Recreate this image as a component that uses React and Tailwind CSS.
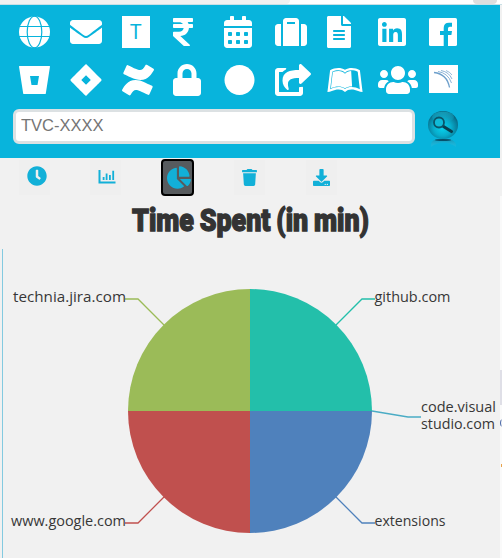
import React from "react";
import {
  FaEnvelope, FaRupeeSign, FaCalendarAlt, FaSuitcase, FaFileAlt, FaLinkedin,
  FaJira, FaConfluence, FaLock, FaCircle, FaShareSquare, FaLeanpub, FaUsers,
  FaClock, FaChartPie, FaTrash, FaDownload,
} from "react-icons/fa";

const Globe = () => (
  <svg className="h-8 w-[31px]" viewBox="0 0 31 32" fill="none" stroke="#08b4dc" strokeWidth="1.200">
    <circle cx="15.500" cy="16" r="15.500" fill="#fff" stroke="none" />
    <ellipse cx="15.500" cy="16" rx="7.300" ry="15.800" />
    <path d="M0 10.500H31M0 20.500H31" />
  </svg>
);

const Facebook = () => (
  <svg className="h-8 w-7" viewBox="0 0 28 32">
    <rect y="2" width="28" height="28" rx="1.600" fill="#fff" />
    <path d="M14.700 30V19H11V15H14.700V12Q14.700 6.700 20 6.700H23V10.700H20.800Q19 10.700 19 12.500V15H23L22.400 19H19V30Z" fill="#08b4dc" />
  </svg>
);

const Bucket = () => (
  <svg className="h-8 w-[31px]" viewBox="0 0 31 32" fill="currentColor">
    <path fillRule="evenodd" d="M0.5 2H30.5Q31 2 31 2.6L26.8 29.4Q26.7 30 26 30H5Q4.300 30 4.200 29.400L0 2.600Q0 2 .5 2ZM11 12L12.500 21H18.500L20 12Z" />
  </svg>
);

const Arcs = () => (
  <svg className="h-7 w-[29px] -translate-y-px bg-white" viewBox="0 0 29 28" fill="none" stroke="#6d9fcb">
    <path d="M5 7.500Q18 9 20.500 22.500" strokeWidth="1.300" />
    <path d="M9 6.500Q19 8 22.500 18" strokeWidth=".8" />
    <path d="M12 5.500Q20 7 23 14" strokeWidth=".8" />
    <path d="M17 5.500Q21 7 23 10" strokeWidth=".7" />
  </svg>
);

const Bars = () => (
  <svg className="h-[14px] w-[18px]" viewBox="0 0 18 14" fill="currentColor">
    <path d="M.5 0H2.500V11.500H17.500V13.500H.5ZM4.700 7H6.500V10H4.700ZM7.700 3.500H9.500V10H7.700ZM11 5H12.800V10H11ZM14.300 .8H16.100V10H14.300Z" />
  </svg>
);

const Orb = () => (
  <svg className="h-10 w-8" viewBox="0 0 32 40">
    <defs>
      <radialGradient id="orb" cx=".48" cy=".6" r=".58">
        <stop offset="0" stopColor="#08d3ef" />
        <stop offset=".5" stopColor="#07adcc" />
        <stop offset=".85" stopColor="#087d9b" />
        <stop offset="1" stopColor="#07617b" />
      </radialGradient>
      <linearGradient id="shine" x2="0" y2="1">
        <stop stopColor="#23cbe6" stopOpacity=".5" />
        <stop offset="1" stopColor="#23cbe6" stopOpacity="0" />
      </linearGradient>
      <linearGradient id="reflection" x2="0" y2="1">
        <stop stopColor="#0a7f9d" stopOpacity=".7" />
        <stop offset="1" stopColor="#5fc6df" stopOpacity=".1" />
      </linearGradient>
    </defs>
    <path d="M7 31Q16 28 25 31Q30 34 29 38Q16 29 4 38Q3 34 7 31Z" fill="url(#reflection)" />
    <ellipse cx="16" cy="31" rx="8" ry="1" fill="#07506a" />
    <ellipse cx="16" cy="16" rx="15" ry="14" fill="url(#orb)" />
    <ellipse cx="16" cy="8" rx="11" ry="5.500" fill="url(#shine)" />
    <path d="M16.500 17.500L24.500 22.500" stroke="#0a4050" strokeWidth="3.200" strokeLinecap="round" />
    <circle cx="12" cy="13.500" r="5" fill="#10bad7" stroke="#0b5468" strokeWidth="1.800" />
  </svg>
);

const links = [
  <Globe />,
  <FaEnvelope className="h-8 w-8" />,
  <span className="flex h-8 w-7 items-center justify-center bg-white text-[20px] leading-none text-[#08b4dc] [font-family:Roboto,sans-serif]">T</span>,
  <FaRupeeSign className="h-8 w-5" />,
  <FaCalendarAlt className="h-8 w-7" />,
  <FaSuitcase className="h-8 w-8" />,
  <FaFileAlt className="h-8 w-6" />,
  <FaLinkedin className="h-8 w-7" />,
  <Facebook />,
  <Bucket />,
  <FaJira className="h-8 w-8" />,
  <FaConfluence className="h-8 w-8" />,
  <FaLock className="h-8 w-7" />,
  <FaCircle className="h-8 w-[31px]" />,
  <FaShareSquare className="h-8 w-9" />,
  <FaLeanpub className="h-8 w-9" />,
  <FaUsers className="h-8 w-10 shrink-0" />,
  <Arcs />,
];

const label = "fill-[#373737] text-[15px] [font-family:'Open_Sans','Noto_Sans',sans-serif]";

function PieChart() {
  return (
    <svg className="block h-[362px] w-[502px]" viewBox="0 196 502 362">
      <path d="M2.500 249V558" stroke="#83cae0" />
      <text x="132" y="231" textLength="237" lengthAdjust="spacingAndGlyphs" stroke="#333" strokeWidth="1.400" className="fill-[#333] text-[32px] font-black [font-family:Roboto,sans-serif] [word-spacing:-1px]">Time Spent (in min)</text>
      <path d="M250 411V289A122 122 0 0 1 372 411Z" fill="#23bfaa" />
      <path d="M250 411H372A122 122 0 0 1 250 533Z" fill="#4f81bc" />
      <path d="M250 411V533A122 122 0 0 1 128 411Z" fill="#c0504e" />
      <path d="M250 411H128A122 122 0 0 1 250 289Z" fill="#9bbb58" />
      <g fill="none" strokeWidth="1.300">
        <path d="M336 325L362 299H375" stroke="#23bfaa" />
        <path d="M372 411L408 417H421" stroke="#4aacc5" />
        <path d="M336 497L362 523H375" stroke="#4f81bc" />
        <path d="M164 497L138 523H125" stroke="#c0504e" />
        <path d="M164 325L138 299H125" stroke="#9bbb58" />
      </g>
      <g className={label}>
        <text x="13" y="302" textLength="113" lengthAdjust="spacingAndGlyphs">technia.jira.com</text>
        <text x="374.500" y="302" textLength="76" lengthAdjust="spacingAndGlyphs">github.com</text>
        <text x="421" y="412" textLength="75" lengthAdjust="spacingAndGlyphs">code.visual</text>
        <text x="421" y="429" textLength="74" lengthAdjust="spacingAndGlyphs">studio.com</text>
        <text x="374.500" y="526" textLength="71" lengthAdjust="spacingAndGlyphs">extensions</text>
        <text x="11" y="526" textLength="115" lengthAdjust="spacingAndGlyphs">www.google.com</text>
      </g>
      <path d="M500 196H502V558H500Z" fill="#fafafa" />
      <path d="M500 370H502V405H500Z" fill="#dfdfe7" />
      <path d="M502 419.500Q500.500 420 500.500 423Q500.500 426 502 426.500" fill="none" stroke="#4665a5" />
      <path d="M501 464H502V467H501Z" fill="#e8a34c" />
    </svg>
  );
}

export default function App() {
  return (
    <div className="h-[558px] w-[502px] overflow-hidden bg-[#f1f1f1]">
      <div className="flex h-[5px] border-b border-[#c9dfe5] bg-white">
        <div className="w-[290px] rounded-br-lg bg-[#f1f1f1]" />
        <div className="ml-[183px] h-1 w-6 rounded-b-full bg-[#dedede]" />
      </div>
      <header className="mr-0.5 h-[153px] bg-[#08b4dc]">
        <nav className="grid grid-cols-[repeat(9,51.300px)] grid-rows-[32px_32px] gap-y-4 pl-[19px] pt-[11px] text-white">
          {links.map((icon, i) => (
            <a key={i} className="flex items-center">{icon}</a>
          ))}
        </nav>
        <div className="flex items-start pl-[13px] pt-[13px]">
          <input
            placeholder="TVC-XXXX"
            className="h-[35px] w-[402px] rounded-md border-[3px] border-[#dce1e3] bg-white pb-0.5 pl-[5px] text-[16.500px] placeholder:text-[#757575] [font-family:'Liberation_Sans',Arial,sans-serif]"
          />
          <div className="ml-3"><Orb /></div>
        </div>
      </header>
      <div className="flex h-[38px] items-start pl-[19px] pt-0.5 text-[#12b0d8]">
        <button className="flex h-[35px] w-[31px] items-center justify-center bg-[#efefef] pl-1 pb-[3px]"><FaClock size={20} /></button>
        <button className="ml-[40px] flex h-[35px] w-[31px] items-center justify-center bg-[#efefef] pb-0.5 pl-[3px]"><Bars /></button>
        <button className="-mt-px ml-[40px] flex h-[37px] w-[33px] items-center justify-center rounded border-2 border-black bg-[#575b5e] pl-[3px]"><FaChartPie className="h-[23px] w-[24px]" /></button>
        <button className="ml-[40px] flex h-[35px] w-[31px] items-center justify-center bg-[#efefef] pb-px"><FaTrash size={17} /></button>
        <button className="ml-[41px] flex h-[35px] w-[31px] items-center justify-center bg-[#efefef] pb-px"><FaDownload size={17} /></button>
      </div>
      <PieChart />
    </div>
  );
}
